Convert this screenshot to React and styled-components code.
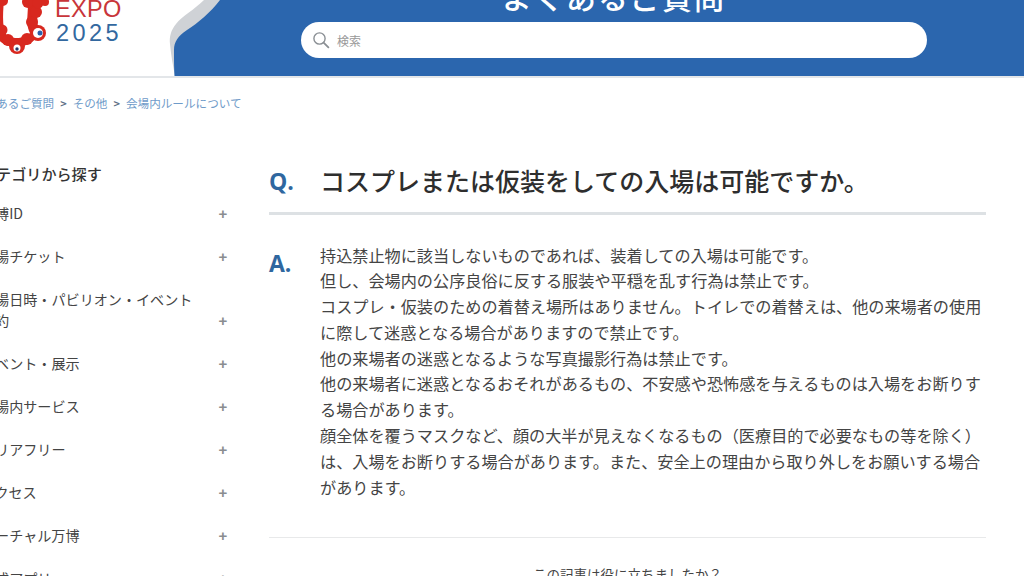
import React from 'react';
import styled, { createGlobalStyle } from 'styled-components';

const jp = '"Noto Sans CJK JP", "Noto Sans", sans-serif';

const GlobalStyle = createGlobalStyle`
  html, body { margin: 0; padding: 0; background: #fff; }
  body { font-family: ${jp}; color: #333; }
`;

const categories = [
  '万博ID',
  '入場チケット',
  '入場日時・パビリオン・イベント予約',
  'イベント・展示',
  '会場内サービス',
  'バリアフリー',
  'アクセス',
  'バーチャル万博',
  '公式アプリ',
];

const answer = [
  '持込禁止物に該当しないものであれば、装着しての入場は可能です。',
  '但し、会場内の公序良俗に反する服装や平穏を乱す行為は禁止です。',
  'コスプレ・仮装のための着替え場所はありません。トイレでの着替えは、他の来場者の使用に際して迷惑となる場合がありますので禁止です。',
  '他の来場者の迷惑となるような写真撮影行為は禁止です。',
  '他の来場者に迷惑となるおそれがあるもの、不安感や恐怖感を与えるものは入場をお断りする場合があります。',
  '顔全体を覆うマスクなど、顔の大半が見えなくなるもの（医療目的で必要なもの等を除く）は、入場をお断りする場合があります。また、安全上の理由から取り外しをお願いする場合があります。',
];

const App = () => {
  return (
    <Page>
      <GlobalStyle />
      <Header>
        <Logo>
          <LogoMark />
          <LogoText>
            <Expo>EXPO</Expo>
            <Year>2025</Year>
          </LogoText>
        </Logo>
        <Banner>
          <BannerCurve />
          <BannerTitle>よくあるご質問</BannerTitle>
          <SearchBox>
            <SearchIcon />
            <SearchText>検索</SearchText>
          </SearchBox>
        </Banner>
      </Header>
      <Breadcrumb>
        <Crumb>よくあるご質問</Crumb>
        <Arrow>&gt;</Arrow>
        <Crumb>その他</Crumb>
        <Arrow>&gt;</Arrow>
        <Crumb>会場内ルールについて</Crumb>
      </Breadcrumb>
      <Content>
        <Sidebar>
          <SideTitle>カテゴリから探す</SideTitle>
          {categories.map((c) => (
            <SideRow key={c}>
              <SideLabel>{c}</SideLabel>
              <Plus>+</Plus>
            </SideRow>
          ))}
        </Sidebar>
        <Main>
          <QuestionRow>
            <Mark>Q.</Mark>
            <Question>コスプレまたは仮装をしての入場は可能ですか。</Question>
          </QuestionRow>
          <AnswerRow>
            <Mark>A.</Mark>
            <Answer>
              {answer.map((line) => (
                <div key={line}>{line}</div>
              ))}
            </Answer>
          </AnswerRow>
          <Feedback>この記事は役に立ちましたか？</Feedback>
        </Main>
      </Content>
    </Page>
  );
};

export default App;

const LogoMark = () => (
  <LogoSvg viewBox="0 0 50 56" width="50" height="56">
    <path
      d="M-1 6 C-2 20 -2 32 3 38 C9 44 22 44 30 38"
      fill="none"
      stroke="#d8281f"
      strokeWidth="9"
      strokeLinecap="round"
    />
    <path
      d="M36 33 C30 26 33 16 33 4"
      fill="none"
      stroke="#d8281f"
      strokeWidth="10"
      strokeLinecap="round"
    />
    <g fill="#d8281f">
      <circle cx="3" cy="1" r="5" />
      <circle cx="2" cy="30" r="5.5" />
      <circle cx="8" cy="40" r="6" />
      <circle cx="17" cy="46" r="8" />
      <circle cx="27" cy="39" r="6" />
      <circle cx="38" cy="33" r="8" />
      <circle cx="32" cy="22" r="6" />
      <circle cx="36" cy="12" r="6" />
      <circle cx="28" cy="2" r="6" />
      <circle cx="38" cy="3" r="5.5" />
      <circle cx="45" cy="2" r="4" />
    </g>
    <circle cx="17" cy="48" r="3.5" fill="#fff" />
    <circle cx="17" cy="49" r="1.7" fill="#243a6b" />
    <circle cx="38" cy="33" r="5" fill="#fff" />
    <circle cx="40" cy="33" r="2.5" fill="#2b5ea8" />
  </LogoSvg>
);

const BannerCurve = () => (
  <CurveSvg viewBox="0 0 60 76" width="60" height="76">
    <path
      d="M36 0 C26 10 14 16 8 24 C3 30 1 37 2 44 C3 55 5 66 7 76 L60 76 L60 0 Z"
      fill="#cfd2d6"
    />
    <path
      d="M52 0 C42 13 30 23 19 30 C10 36 6 42 6 50 C6 60 6 68 6.5 76 L60 76 L60 0 Z"
      fill="#2b66ae"
    />
  </CurveSvg>
);

const SearchIcon = () => (
  <svg viewBox="0 0 18 18" width="18" height="18" fill="none" stroke="#8a8f94" strokeWidth="1.4">
    <circle cx="7.5" cy="7.5" r="5.6" />
    <path d="M11.6 11.6 L16.4 16.4" strokeLinecap="round" strokeWidth="1.8" />
  </svg>
);

const Page = styled.div`
  width: 1024px;
  height: 576px;
  overflow: hidden;
  background: #fff;
`;

const Header = styled.header`
  display: flex;
  height: 76px;
  border-bottom: 2px solid #e3e6e9;
`;

const Logo = styled.div`
  display: flex;
  width: 170px;
  flex-shrink: 0;
`;

const LogoSvg = styled.svg`
  display: block;
  flex-shrink: 0;
`;

const LogoText = styled.div`
  margin-left: 5px;
  font-family: "Liberation Sans", Arial, sans-serif;
`;

const Expo = styled.div`
  margin-top: -3px;
  font-size: 23.5px;
  line-height: 25px;
  letter-spacing: 0.3px;
  color: #c8353a;
`;

const Year = styled.div`
  margin-top: -1px;
  margin-left: 1px;
  font-size: 23.5px;
  line-height: 24px;
  letter-spacing: 3.4px;
  color: #33689f;
`;

const Banner = styled.div`
  position: relative;
  flex: 1;
  margin-left: 48px;
  background: #2b66ae;
  display: flex;
  flex-direction: column;
  align-items: flex-start;
  padding-left: 83px;
`;

const CurveSvg = styled.svg`
  position: absolute;
  left: -50px;
  top: 0;
  display: block;
`;

const BannerTitle = styled.h1`
  position: relative;
  margin: -22px 0 0;
  width: 626px;
  height: 44px;
  text-align: center;
  font-size: 30px;
  line-height: 36px;
  letter-spacing: 2px;
  font-weight: 500;
  color: #fff;
  white-space: nowrap;
`;

const SearchBox = styled.div`
  position: relative;
  display: flex;
  align-items: center;
  gap: 7px;
  box-sizing: border-box;
  width: 626px;
  height: 36px;
  padding-left: 11px;
  border-radius: 18px;
  background: #fff;
`;

const SearchText = styled.span`
  font-size: 12px;
  color: #999;
`;

const Breadcrumb = styled.nav`
  display: flex;
  align-items: center;
  gap: 6px;
  height: 20px;
  margin: 15px 0 0 -27px;
  font-size: 11.6px;
  color: #6f9bc9;
  white-space: nowrap;
`;

const Crumb = styled.span``;

const Arrow = styled.span`
  color: #5f7186;
  font-size: 11px;
  font-weight: 700;
`;

const Content = styled.div`
  display: flex;
  margin: 51px 0 0 -19px;
`;

const Sidebar = styled.aside`
  box-sizing: border-box;
  width: 288px;
  flex-shrink: 0;
  padding-right: 40px;
  margin-top: -2px;
`;

const SideTitle = styled.div`
  font-size: 15.1px;
  font-weight: 500;
  line-height: 22px;
  color: #333;
  margin-bottom: 8px;
`;

const SideRow = styled.div`
  display: flex;
  align-items: flex-end;
  justify-content: space-between;
  padding: 10.75px 0;
`;

const SideLabel = styled.div`
  width: 222px;
  font-size: 14.1px;
  line-height: 21.5px;
  color: #444;
`;

const Plus = styled.span`
  width: 12px;
  text-align: center;
  font-family: "Liberation Sans", sans-serif;
  font-size: 15px;
  font-weight: 700;
  line-height: 21.5px;
  color: #8a8d90;
`;

const Main = styled.main`
  width: 717px;
  flex-shrink: 0;
`;

const Mark = styled.div`
  width: 51px;
  flex-shrink: 0;
  font-family: "Open Sans", "Liberation Sans", sans-serif;
  font-size: 23px;
  font-weight: 700;
  color: #2f679f;
`;

const QuestionRow = styled.div`
  display: flex;
  align-items: center;
  height: 36px;
  padding-bottom: 13px;
  border-bottom: 3px solid #dde1e4;
  margin-top: -1px;
`;

const Question = styled.h2`
  margin: -3px 0 0;
  font-size: 25px;
  line-height: 36px;
  font-weight: 500;
  color: #2e2e2e;
  white-space: nowrap;
`;

const AnswerRow = styled.div`
  display: flex;
  padding: 27.5px 0 36.5px;
  border-bottom: 1px solid #e8e9ea;
  ${Mark} {
    line-height: 41px;
  }
`;

const Answer = styled.div`
  flex: 1;
  font-size: 16.15px;
  line-height: 25.8px;
  color: #444;
`;

const Feedback = styled.div`
  margin-top: 26px;
  text-align: center;
  font-size: 13.5px;
  line-height: 20px;
  color: #444;
`;
